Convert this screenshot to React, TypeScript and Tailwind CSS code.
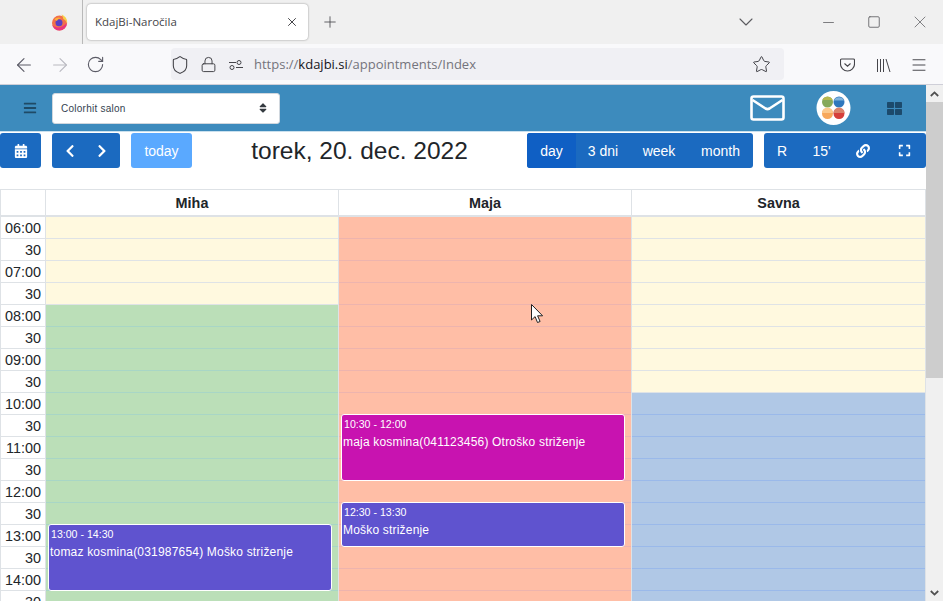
import React from "react";
import { FaBars, FaCalendarAlt, FaChevronLeft, FaChevronRight, FaExpand, FaLink, FaSort, FaThLarge } from "react-icons/fa";
import { ArrowLeft, ArrowRight, ChevronDown, Lock, Menu, Minus, Plus, RotateCw, Shield, Square, Star, X } from "lucide-react";

const times = ["06:00","30","07:00","30","08:00","30","09:00","30","10:00","30","11:00","30","12:00","30","13:00","30","14:00","30"];
const C = "bg-[#fff9df] border-[#dfe3e6]", S = "bg-[#ffbea6] border-[#edb4ae]", G = "bg-[#bbdfb8] border-[#a8d6c6]", B = "bg-[#b0c8e6] border-[#9ab9ea]";
const miha = times.map((_, i) => (i < 4 ? C : G));
const maja = times.map(() => S);
const savna = times.map((_, i) => (i < 8 ? C : B));

function Col({ cells, children, className }: { cells: string[]; children?: React.ReactNode; className: string }) {
  return (
    <div className={`relative flex flex-col border-r border-[#dee2e6] ${className}`}>
      {cells.map((c, i) => (
        <div key={i} className={`h-[22px] shrink-0 border-b ${c}`} />
      ))}
      {children}
    </div>
  );
}

function Ev({ top, h, time, text, color }: { top: string; h: string; time: string; text: string; color: string }) {
  return (
    <div className={`absolute left-[2px] w-[284px] rounded-[3px] border border-white text-white px-[1px] ${top} ${h} ${color}`}>
      <div className="text-[10.6px] leading-[13px] mt-[3px] pl-[1px]">{time}</div>
      <div className="text-[12px] leading-[14px] mt-[4px] tracking-[0.19px]">{text}</div>
    </div>
  );
}

function Fox() {
  return (
    <svg width="17" height="17" viewBox="0 0 17 17">
      <circle cx="8.5" cy="9" r="7.5" fill="#f2704a" />
      <path d="M8.5 16.5A7.5 7.5 0 0 1 1.3 11c2 2.2 6 3.2 9.2 1.8 2.2-1 4-2.4 5.3-3.8A7.5 7.5 0 0 1 8.5 16.5z" fill="#e8367f" />
      <path d="M10.5 .5c3.5 1.4 6.2 4.6 5.6 9-.6-2.2-2-3.8-3.8-4.6C12 3 11.4 1.6 10.5 .5z" fill="#f7d048" />
      <circle cx="8" cy="8.8" r="3.5" fill="#5b3fc4" />
      <path d="M3.5 5.5c1.6-2 4.8-2.6 6.5-1-1.8 0-3.4 .8-4 2.4L3.5 5.5z" fill="#ffb03a" />
    </svg>
  );
}

function Logo() {
  return (
    <svg width="35" height="34" viewBox="0 0 35 34">
      <circle cx="17.5" cy="17" r="17" fill="white" />
      <circle cx="11.5" cy="11" r="5.5" fill="#86a95a" />
      <path d="M6.5 9a5.5 5.5 0 0 1 10 0z" fill="#b7b84e" />
      <circle cx="23" cy="11" r="5.5" fill="#2f78bd" />
      <path d="M18 9.5a5.5 5.5 0 0 1 10 0z" fill="#7fb3dc" />
      <circle cx="11.5" cy="22.5" r="5.5" fill="#f7a85c" />
      <path d="M6 22a5.5 5.5 0 0 1 11 0z" fill="#fbc98d" />
      <circle cx="23" cy="22.5" r="5.5" fill="#d5403c" />
      <path d="M17.5 22a5.5 5.5 0 0 1 11 0z" fill="#d9826a" />
    </svg>
  );
}

export default function App() {
  return (
    <div className="relative w-[943px] h-[601px] overflow-hidden flex flex-col bg-white font-['Liberation_Sans',Arial,sans-serif] text-[#212529]">
      {/* tab strip */}
      <div className="h-[44px] shrink-0 bg-[#f0f0f0] flex items-start">
        <div className="w-[83px] h-[44px] flex items-center justify-end pr-[14px] border-r border-[#b9b9b9]"><Fox /></div>
        <div className="mt-[4px] ml-[4px] w-[221px] h-[36px] bg-white rounded-[4px] shadow-[0_0_2px_rgba(0,0,0,0.45)] flex items-center pl-[8px] pr-[9px] justify-between">
          <span className="text-[11.5px] text-[#45454a] font-['Open_Sans',sans-serif]">KdajBi-Naročila</span>
          <X size={14} strokeWidth={1.5} className="text-[#2b2b30]" />
        </div>
        <div className="ml-[13px] h-[44px] flex items-center"><Plus size={18} strokeWidth={1.1} className="text-[#45454a]" /></div>
        <div className="flex-1" />
        <div className="h-[44px] flex items-center text-[#5b5b5f]">
          <ChevronDown size={24} strokeWidth={1.1} className="mr-[62px]" />
          <Minus size={17} strokeWidth={1.1} className="mr-[30px]" />
          <Square size={14} strokeWidth={1.4} className="mr-[29px]" />
          <X size={20} strokeWidth={0.9} className="mr-[13px]" />
        </div>
      </div>
      {/* url bar */}
      <div className="h-[41px] shrink-0 bg-[#f9f9fb] border-b border-[#cfcfd8] flex items-center pl-[13px] pt-[1px] relative">
        <ArrowLeft size={22} strokeWidth={1.2} className="text-[#5b5b66]" />
        <ArrowRight size={22} strokeWidth={1.2} className="text-[#b9b9c0] ml-[14px]" />
        <RotateCw size={19} strokeWidth={1.4} className="text-[#5b5b66] ml-[15px]" />
        <div className="ml-[66px] w-[613px] h-[32px] -mt-[1px] bg-[#f0f0f4] rounded-[4px] flex items-center">
          <Shield size={20} strokeWidth={1.3} className="-ml-[1px] mt-[1px] text-[#45454a]" />
          <Lock size={17} strokeWidth={1.4} className="ml-[10px] mt-[1px] text-[#45454a]" />
          <svg width="16" height="16" viewBox="0 0 16 16" fill="none" stroke="#45454a" strokeWidth="1" className="ml-[11px] mt-[1px]"><path d="M1 5.5h7M8 10.5h7" /><circle cx="11" cy="5.5" r="2" /><circle cx="4" cy="10.5" r="2" /></svg>
          <span className="ml-[10px] mt-[2px] text-[13px] text-[#74747c] font-['Open_Sans',sans-serif]">https://<span className="text-[#15141a]">kdajbi.si</span>/appointments/Index</span>
          <div className="flex-1" />
          <Star size={19} strokeWidth={1.2} className="mr-[13px] mt-[1px] text-[#3a3a40]" />
        </div>
        <div className="absolute right-0 top-[1px] h-[40px] flex items-center text-[#45454a]">
          <svg width="15" height="14" viewBox="0 0 15 14" fill="none" stroke="#45454a" strokeWidth="1.1" className="mr-[21px]"><path d="M1.5 1h12a1 1 0 0 1 1 1v4a7 7 0 0 1-14 0V2a1 1 0 0 1 1-1z" /><path d="M4.5 5.5L7.5 8.2l3-2.7" /></svg>
          <svg width="15" height="15" viewBox="0 0 15 15" fill="none" stroke="#45454a" strokeWidth="1" className="mr-[19px]"><path d="M1.5 1v13M4.5 1v13M7.5 1v13M10 1l4 13" /></svg>
          <Menu size={18} strokeWidth={1.3} className="mr-[15px]" />
        </div>
      </div>
      {/* page */}
      <div className="flex-1 flex min-h-0">
        <div className="w-[926px] shrink-0 flex flex-col min-h-0">
          <div className="h-[47px] shrink-0 bg-[#3d8bbd] flex items-center border-b border-[#c9e0ee]">
            <FaBars size={14} className="ml-[23px] text-[#1f4a66]" />
            <div className="ml-[15px] w-[228px] h-[31px] bg-white rounded-[3px] border border-[#d0d7de] flex items-center justify-between pl-[8px] pr-[10px]">
              <span className="text-[10px] text-[#333f50] tracking-[0.25px]">Colorhit salon</span>
              <FaSort size={12} className="text-[#343a40]" />
            </div>
            <div className="flex-1" />
            <svg width="35" height="26" viewBox="0 0 35 26" fill="none" stroke="white" strokeWidth="2.6" className="mr-[31px]"><rect x="1.5" y="1.5" width="32" height="23" rx="2" /><path d="M2.5 5l13 8.5a4 4 0 0 0 4 0L32.5 5" /></svg>
            <div className="mr-[36px] flex"><Logo /></div>
            <FaThLarge size={15} className="mr-[24px] text-[#1c4a6c]" />
          </div>
          <div className="h-[57px] shrink-0 flex items-start pt-[1px]">
            <button className="w-[41px] h-[35px] bg-[#1b6ac0] rounded-[3px] text-white flex items-center justify-center"><FaCalendarAlt size={14} /></button>
            <div className="ml-[11px] w-[68px] h-[35px] bg-[#1b6ac0] rounded-[3px] text-white flex items-center justify-between px-[11px]">
              <FaChevronLeft size={14} /><FaChevronRight size={14} />
            </div>
            <button className="ml-[11px] w-[61px] h-[35px] pt-[1px] bg-[#5aa9ff] rounded-[3px] text-white text-[14px]">today</button>
            <div className="w-[335px] text-center text-[24.5px] leading-[35px]">torek, 20. dec. 2022</div>
            <div className="w-[226px] h-[35px] pt-0 bg-[#1b6ac0] rounded-[3px] text-white text-[14px] flex items-center overflow-hidden">
              <div className="w-[49px] h-full bg-[#0f5fc4] flex items-center justify-center pt-[1px]">day</div>
              <div className="w-[54px] text-center pt-[1px]">3 dni</div>
              <div className="w-[58px] text-center pt-[1px]">week</div>
              <div className="w-[65px] text-center pt-[1px]">month</div>
            </div>
            <div className="ml-[11px] w-[162px] h-[35px] bg-[#1b6ac0] rounded-[3px] text-white text-[14px] flex items-center">
              <div className="w-[36px] text-center pt-[1px]">R</div>
              <div className="w-[43px] text-center pt-[1px]">15'</div>
              <div className="w-[39px] flex justify-center"><FaLink size={14} /></div>
              <div className="w-[44px] flex justify-center"><FaExpand size={13} /></div>
            </div>
          </div>
          {/* calendar */}
          <div className="flex-1 min-h-0 overflow-hidden border-l border-t border-[#dee2e6]">
            <div className="flex h-[27px] border-b-2 border-[#dee2e6] text-[14.4px] font-bold">
              <div className="w-[45px] border-r border-[#dee2e6]" />
              <div className="w-[293px] border-r border-[#dee2e6] text-center leading-[27px]">Miha</div>
              <div className="w-[293px] border-r border-[#dee2e6] text-center leading-[27px]">Maja</div>
              <div className="w-[294px] border-r border-[#dee2e6] text-center leading-[27px]">Savna</div>
            </div>
            <div className="flex">
              <div className="w-[45px] shrink-0 flex flex-col border-r border-[#dee2e6]">
                {times.map((t, i) => (
                  <div key={i} className="h-[22px] shrink-0 border-b border-[#dee2e6] text-right pr-[4px] text-[14.4px] leading-[22px]">{t}</div>
                ))}
              </div>
              <Col cells={miha} className="w-[293px]">
                <Ev top="top-[307px]" h="h-[67px]" time="13:00 - 14:30" text="tomaz kosmina(031987654) Moško striženje" color="bg-[#5f53cf]" />
              </Col>
              <Col cells={maja} className="w-[293px]">
                <Ev top="top-[197px]" h="h-[67px]" time="10:30 - 12:00" text="maja kosmina(041123456) Otroško striženje" color="bg-[#c813b0]" />
                <Ev top="top-[285px]" h="h-[45px]" time="12:30 - 13:30" text="Moško striženje" color="bg-[#5f53cf]" />
              </Col>
              <Col cells={savna} className="w-[294px]" />
            </div>
          </div>
        </div>
        {/* scrollbar */}
        <div className="flex-1 flex flex-col bg-[#f0f0f0]">
          <div className="h-[17px] flex items-center justify-center">
            <svg width="9" height="6" viewBox="0 0 9 6" fill="none" stroke="#505050" strokeWidth="1.8"><path d="M.8 5L4.5 1.4 8.2 5" /></svg>
          </div>
          <div className="h-[276px] bg-[#cdcdcd]" />
          <div className="flex-1" />
          <div className="h-[17px] flex items-center justify-center">
            <svg width="9" height="6" viewBox="0 0 9 6" fill="none" stroke="#505050" strokeWidth="1.8"><path d="M.8 1L4.5 4.6 8.2 1" /></svg>
          </div>
        </div>
      </div>
      {/* mouse cursor */}
      <svg width="13" height="20" viewBox="0 0 13 20" className="absolute left-[531px] top-[304px]"><path d="M.5.5v15.5l3.6-3.4 2.4 5.9 2.6-1-2.5-5.7h5z" fill="white" stroke="#222" strokeWidth="1" /></svg>
    </div>
  );
}
